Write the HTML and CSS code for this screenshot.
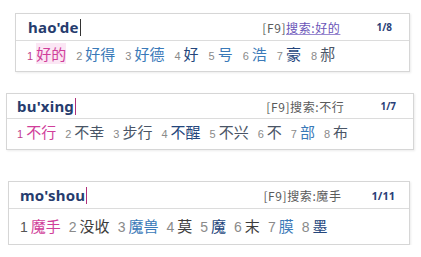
FILE: index.html
```html
<!DOCTYPE html>
<html lang="zh">
  <head>
    <meta charset="UTF-8" />
    <title>输入法候选框</title>
    <link rel="stylesheet" href="styles.css">
  </head>
  <body>
    <div class="ime ime-1">
      <div class="ime-head">
        <span class="code">hao'de</span><span class="caret"></span>
        <span class="hint">[F9]<span class="hint-link">搜索:好的</span></span>
        <span class="page">1/8</span>
      </div>
      <div class="ime-cands">
        <span class="num first">1</span><span class="cand first sel">好的</span>
        <span class="num">2</span><span class="cand c-blue">好得</span>
        <span class="num">3</span><span class="cand c-blue">好德</span>
        <span class="num">4</span><span class="cand c-navy">好</span>
        <span class="num">5</span><span class="cand c-blue">号</span>
        <span class="num">6</span><span class="cand c-blue">浩</span>
        <span class="num">7</span><span class="cand c-navy">豪</span>
        <span class="num">8</span><span class="cand c-gray">郝</span>
      </div>
    </div>

    <div class="ime ime-2">
      <div class="ime-head">
        <span class="code">bu'xing</span><span class="caret pink"></span>
        <span class="hint">[F9]搜索:不行</span>
        <span class="page">1/7</span>
      </div>
      <div class="ime-cands">
        <span class="num first">1</span><span class="cand first">不行</span>
        <span class="num">2</span><span class="cand c-gray">不幸</span>
        <span class="num">3</span><span class="cand c-gray">步行</span>
        <span class="num">4</span><span class="cand c-navy">不醒</span>
        <span class="num">5</span><span class="cand c-gray">不兴</span>
        <span class="num">6</span><span class="cand c-gray">不</span>
        <span class="num">7</span><span class="cand c-blue">部</span>
        <span class="num">8</span><span class="cand c-gray">布</span>
      </div>
    </div>

    <div class="ime ime-3">
      <div class="ime-head">
        <span class="code">mo'shou</span><span class="caret pink"></span>
        <span class="hint">[F9]搜索:魔手</span>
        <span class="page">1/11</span>
      </div>
      <div class="ime-cands">
        <span class="num first">1</span><span class="cand first">魔手</span>
        <span class="num">2</span><span class="cand c-dark">没收</span>
        <span class="num">3</span><span class="cand c-blue">魔兽</span>
        <span class="num">4</span><span class="cand c-dark">莫</span>
        <span class="num">5</span><span class="cand c-navy">魔</span>
        <span class="num">6</span><span class="cand c-dark">末</span>
        <span class="num">7</span><span class="cand c-blue">膜</span>
        <span class="num">8</span><span class="cand c-navy">墨</span>
      </div>
    </div>
  </body>
</html>
```

FILE: styles.css
```css
body {
  margin: 0;
  padding: 13px 0 0 0;
  background-color: #ffffff;
  font-family: "Noto Sans", "Noto Sans CJK SC", sans-serif;
}

.ime {
  border: 1px solid #d6d6d6;
  box-shadow: 1px 1px 2px rgba(0, 0, 0, 0.08);
  background: #fff;
}

.ime-1 {
  margin: 0 11px 0 15px;
}

.ime-2 {
  margin: 21px 7px 0 6px;
}

.ime-3 {
  margin: 31px 11px 0 8px;
}

.ime-head {
  display: flex;
  align-items: center;
  height: 26px;
  border-bottom: 1px solid #dcdcdc;
  padding-left: 12px;
  padding-right: 17px;
}

.ime-2 .ime-head {
  height: 24px;
  padding-left: 10px;
}

.ime-3 .ime-head {
  padding-left: 11px;
  padding-right: 14px;
}

.code {
  font-size: 15px;
  font-weight: bold;
  color: #263c6e;
  letter-spacing: 0.2px;
}

.caret {
  display: inline-block;
  width: 1px;
  height: 17px;
  background: #333;
  margin-left: 1px;
}

.caret.pink {
  background: #b0307a;
}

.hint {
  margin-left: auto;
  font-size: 12px;
  letter-spacing: 0.6px;
  color: #5a5a5a;
  font-family: "Noto Sans CJK SC", sans-serif;
}

.hint-link {
  color: #6a55b8;
  text-decoration: underline;
  text-decoration-color: #9a8ad0;
}

.page {
  font-size: 10px;
  font-weight: bold;
  color: #2b3f78;
  margin-left: 36px;
}

.ime-3 .page {
  font-size: 11px;
  margin-left: 30px;
}

.ime-cands {
  display: flex;
  align-items: baseline;
  height: 30px;
  padding-left: 11px;
  padding-top: 2px;
  box-sizing: border-box;
  font-family: "Noto Sans CJK SC", sans-serif;
}

.ime-2 .ime-cands {
  padding-left: 10px;
}

.ime-3 .ime-cands {
  height: 35px;
  padding-left: 11px;
  padding-top: 6px;
}

.num {
  font-size: 11px;
  color: #8a8a8a;
  margin-left: 10px;
  margin-right: 3px;
  font-family: "Liberation Sans", sans-serif;
}

.ime-2 .num {
  margin-left: 9px;
}

.ime-3 .num {
  font-size: 14px;
  margin-left: 8px;
}

.num.first,
.ime-2 .num.first,
.ime-3 .num.first {
  margin-left: 0;
  color: #c0408e;
}

.ime-3 .num.first {
  color: #555;
}

.cand {
  font-size: 15px;
  color: #2f6aa8;
}

.cand.first {
  color: #d03e9a;
}

.cand.sel {
  background: #fbe6f4;
}

.c-blue {
  color: #3a79b8;
}

.c-navy {
  color: #24467c;
}

.c-gray {
  color: #4a5566;
}

.c-dark {
  color: #3c3c3c;
}
```
